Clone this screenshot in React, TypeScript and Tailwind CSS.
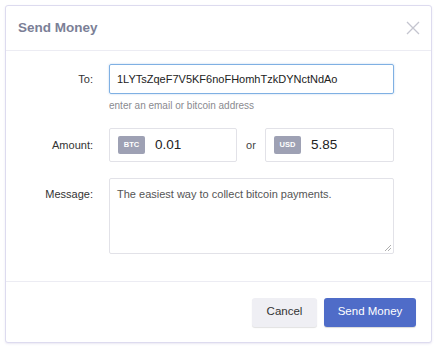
export default function App() {
    return (
        <div className="h-[350px] w-[438px] bg-white p-[5px] font-['Liberation_Sans',Arial,sans-serif]">
            <div className="flex h-[338px] w-[427px] flex-col rounded-[3px] border border-[#dddbef] bg-white shadow-[0_1px_2px_rgba(120,110,180,0.15)]">
                {/* Header */}
                <div className="flex h-[45px] shrink-0 items-center justify-between border-b border-[#ececf3] pl-[12px] pr-[11px]">
                    <h2 className="text-[13.5px] font-bold text-[#7b7f97]">Send Money</h2>
                    <svg className="h-[14px] w-[14px]" viewBox="0 0 14 14" fill="none" stroke="#c4c5cf" strokeWidth={1.3}>
                        <path d="M1 1l12 12M13 1L1 13" />
                    </svg>
                </div>

                {/* Body */}
                <div className="flex flex-1 flex-col border-b border-[#ececf3] pt-[13px]">
                    <div className="flex items-start">
                        <label className="w-[87px] shrink-0 pt-[8px] text-right text-[11px] leading-[14px] text-[#333]">To:</label>
                        <div className="ml-[16px] flex flex-col">
                            <div className="flex h-[30px] w-[285px] items-center rounded-[2px] border border-[#7fb0e3] px-[7px] text-[11px] text-[#222] shadow-[0_0_2px_rgba(110,160,220,0.5)]">
                                1LYTsZqeF7V5KF6noFHomhTzkDYNctNdAo
                            </div>
                            <span className="mt-[5px] text-[10px] leading-[14px] text-[#8a8a8f]">enter an email or bitcoin address</span>
                        </div>
                    </div>

                    <div className="mt-[15px] flex items-center">
                        <label className="w-[87px] shrink-0 text-right text-[11px] leading-[14px] text-[#333]">Amount:</label>
                        <div className="ml-[16px] flex items-center">
                            <div className="flex h-[34px] w-[128px] items-center rounded-[2px] border border-[#e2e2e8] pl-[8px]">
                                <span className="flex h-[18px] w-[27px] items-center justify-center rounded-[2px] bg-[#9ea1b4] text-[7.5px] font-bold text-white">BTC</span>
                                <span className="ml-[10px] text-[13.5px] text-[#222]">0.01</span>
                            </div>
                            <span className="w-[28px] text-center text-[11px] text-[#444]">or</span>
                            <div className="flex h-[34px] w-[129px] items-center rounded-[2px] border border-[#e2e2e8] pl-[8px]">
                                <span className="flex h-[18px] w-[27px] items-center justify-center rounded-[2px] bg-[#9ea1b4] text-[7.5px] font-bold text-white">USD</span>
                                <span className="ml-[10px] text-[13.5px] text-[#222]">5.85</span>
                            </div>
                        </div>
                    </div>

                    <div className="mt-[16px] flex items-start">
                        <label className="w-[87px] shrink-0 pt-[9px] text-right text-[11px] leading-[14px] text-[#333]">Message:</label>
                        <div className="relative ml-[16px] h-[76px] w-[285px] rounded-[2px] border border-[#e2e2e8] px-[7px] pt-[8px] text-[11px] leading-[14px] text-[#555]">
                            The easiest way to collect bitcoin payments.
                            <svg className="absolute bottom-[2px] right-[2px] h-[6px] w-[6px]" viewBox="0 0 6 6" stroke="#999" strokeWidth={0.8}>
                                <path d="M0 6L6 0M3 6L6 3" />
                            </svg>
                        </div>
                    </div>
                </div>

                {/* Footer */}
                <div className="flex h-[60px] shrink-0 items-center justify-end gap-[7px] pr-[15px]">
                    <button className="h-[29px] w-[65px] rounded-[3px] bg-[#efeff4] text-[11.5px] text-[#333] shadow-[0_1px_1px_rgba(0,0,0,0.12)]">Cancel</button>
                    <button className="h-[29px] w-[92px] rounded-[3px] bg-[#4f6cc8] text-[11.5px] text-white shadow-[0_1px_1px_rgba(0,0,0,0.15)]">Send Money</button>
                </div>
            </div>
        </div>
    );
}
